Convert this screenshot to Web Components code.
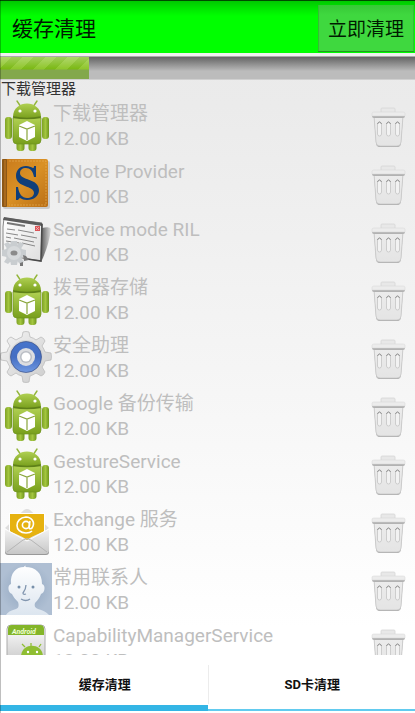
<!DOCTYPE html>
<html lang="zh-CN">
<head>
<meta charset="utf-8">
<meta name="viewport" content="width=device-width, initial-scale=1">
<title>缓存清理</title>
<style>
html, body { margin: 0; height: 100%; }
body { font-family: Roboto, "Noto Sans CJK SC", sans-serif; overflow: hidden; }
</style>
</head>
<body>
<cache-app></cache-app>
<script>
const define = (name, html, setup) => {
  const template = document.createElement('template');
  template.innerHTML = html;
  customElements.define(name, class extends HTMLElement {
    connectedCallback() {
      if (this.shadowRoot) return;
      this.attachShadow({ mode: 'open' }).append(template.content.cloneNode(true));
      if (setup) setup(this, this.shadowRoot);
    }
  });
};

const ICONS = {
  android: `
    <defs>
      <linearGradient id="g" x1="0" x2="0" y1="0" y2="1"><stop offset="0" stop-color="#b0d052"/><stop offset="1" stop-color="#789f1c"/></linearGradient>
      <linearGradient id="s" x1="0" x2="1" y1="0" y2="0"><stop offset="0" stop-color="#7fa225"/><stop offset=".5" stop-color="#a3c63f"/><stop offset="1" stop-color="#6f951c"/></linearGradient>
    </defs>
    <path d="M17 2l4 6M37 2l-4 6" stroke="#93b53a" stroke-width="1.4" stroke-linecap="round"/>
    <rect x="16.500" y="38" width="8" height="14" rx="3" fill="url(#s)"/><rect x="28.500" y="38" width="8" height="14" rx="3" fill="url(#s)"/>
    <rect x="5" y="18" width="7" height="22" rx="3" fill="url(#s)"/><rect x="42" y="18" width="7" height="22" rx="3" fill="url(#s)"/>
    <path d="M13 19h28v22q0 4-4 4H17q-4 0-4-4z" fill="url(#g)"/>
    <path d="M13 19h28v22q0 4-4 4H17q-4 0-4-4z" fill="none" stroke="#6f9420" stroke-width=".7"/>
    <path d="M13 18C13 0 41 0 41 18q-14 3-28 0z" fill="url(#g)"/>
    <path d="M13 18q14 3 28 0" fill="none" stroke="#5f8119" stroke-width="1.500"/>
    <circle cx="20" cy="12" r="1.600" fill="#fff"/><circle cx="35" cy="12" r="1.600" fill="#fff"/>
    <path d="M27 22l8 4v12l-8 4-8-4V26z" fill="#fff"/>
    <path d="M19 27l8 3 8-3M27 30v11" fill="none" stroke="#89a53b" stroke-width="1.200"/>`,
  book: `
    <defs><linearGradient id="b" x1="0" x2="1" y1="0" y2="1"><stop stop-color="#c8791b"/><stop offset=".5" stop-color="#da9125"/><stop offset="1" stop-color="#b96e15"/></linearGradient></defs>
    <rect x="3" y="4" width="47" height="48" rx="2" fill="#bbb" opacity=".7"/>
    <rect x="2" y="2" width="46" height="48" rx="2" fill="url(#b)"/>
    <rect x="2" y="2" width="5" height="48" rx="1" fill="#8d5816"/><path d="M5 3v46" stroke="#c47d27"/>
    <path d="M9 4h37v44H9" fill="none" stroke="#e9b45b" stroke-width=".6" stroke-dasharray="2 1"/>
    <path d="M36 9v11h-2c-1-6-4-9-8-9-4 0-6 2-6 5 0 8 19 5 19 17 0 6-5 10-12 10-3 0-5-1-7-2-1 0-1 1-2 2h-2V30h2c1 7 4 11 9 11 4 0 7-2 7-5 0-8-18-5-18-17 0-6 4-10 10-10 3 0 5 1 7 2 1 0 1-1 1-2z" fill="#103f7a"/>`,
  service: `
    <defs><linearGradient id="p" x1="0" x2="1" y1="0" y2="1"><stop stop-color="#fff"/><stop offset="1" stop-color="#dedede"/></linearGradient>
    <linearGradient id="h"><stop stop-color="#666"/><stop offset="1" stop-color="#ddd"/></linearGradient></defs>
    <path d="M42 13q8-2 9 1-2 16-9 31z" fill="url(#h)"/>
    <path d="M3 12L4 3l38 5-1 38-38-6z" fill="url(#p)" stroke="#888" stroke-width="1"/>
    <path d="M3 5l1-3 38 6v3z" fill="#5c5c5c"/>
    <path d="M7 8l18 3" stroke="#777" stroke-width="1.800"/>
    <rect x="35" y="11" width="5" height="5" fill="#db5357"/><path d="M36 12l3 3m0-3l-3 3" stroke="#f3b5b7" stroke-width=".8"/>
    <path d="M7 14l8 1m3 0l16 3M6 18l12 2m3 0l16 3M6 22l5 1m3 0l20 4M6 26l13 2m3 0l13 3" stroke="#888" stroke-width="1"/>
    <path d="M42 9l-1 37-14-2" fill="none" stroke="#4a4a4a" stroke-width="1.600"/>
    <g fill="#c9cdd0"><circle cx="14" cy="38" r="9"/>
    <path d="M11 26h6l1 5h-8zM11 50h6l1-5h-8zM2 35v6l5 1v-8zM26 35v6l-5 1v-8zM4 29l4-2 4 4-4 4zM24 29l-4-2-4 4 4 4zM4 47l4 2 4-4-4-4zM24 47l-4 2-4-4 4-4z"/></g>
    <circle cx="14" cy="38" r="7" fill="#d7dadc"/><ellipse cx="14" cy="38" rx="3.500" ry="2.500" fill="#8b8b8b"/><path d="M23 40l3 1 3 4-5 1zM20 48l3-1v4h-3z" fill="#777"/>`,
  gear: `
    <defs><linearGradient id="m" x1="0" x2="1" y1="0" y2="1"><stop stop-color="#f4f4f4"/><stop offset="1" stop-color="#cbcbcb"/></linearGradient>
    <linearGradient id="u" x1="0" x2="0" y1="0" y2="1"><stop stop-color="#4775cc"/><stop offset=".5" stop-color="#456ec2"/><stop offset="1" stop-color="#7099e2"/></linearGradient></defs>
    <path d="M22 6l1-5q3-1 6 0l1 5q4 1 6 3l5-3q3 1 4 4l-3 5q2 3 3 6l6 1q1 4 0 7l-6 1q-1 4-3 6l3 5q-1 3-4 4l-5-3q-3 2-6 3l-1 6q-3 1-6 0l-1-6q-4-1-6-3l-5 3q-3-1-4-4l3-5q-2-3-3-6l-6-1q-1-3 0-7l6-1q1-4 3-6l-3-5q1-3 4-4l5 3q3-2 6-3z" fill="url(#m)" stroke="#bdbdbd" stroke-width=".8"/>
    <circle cx="26" cy="26" r="17" fill="#d6d6d6"/><circle cx="26" cy="26" r="15.500" fill="url(#u)" stroke="#3c5187" stroke-width=".7"/>
    <circle cx="26" cy="26" r="9" fill="#dcdde0"/><circle cx="26" cy="26" r="6" fill="#b9bdc4"/><circle cx="26" cy="26" r="4.500" fill="#fff"/>`,
  mail: `
    <defs><linearGradient id="e" x1="0" x2="0" y1="0" y2="1"><stop stop-color="#f2f2f2"/><stop offset="1" stop-color="#c7c7c7"/></linearGradient></defs>
    <rect x="5" y="25" width="44" height="25" rx="3" fill="#999"/>
    <path d="M5 23L24 5q3-2 6 0l19 18-21 19z" fill="#dedede"/>
    <path d="M9 8h36v26H9z" fill="#fff"/><path d="M10 9h34v24H10z" fill="#e6b210"/>
    <path d="M5 24l22 10 22-10v21q0 4-4 4H9q-4 0-4-4z" fill="url(#e)"/>
    <path d="M10 22l17 13 17-13V10H10z" fill="#e6b210"/>
    <path d="M5 24l22 12 22-12" fill="none" stroke="#fff"/><path d="M7 47l16-12q4-3 8 0l16 12" fill="none" stroke="#b5b5b5"/>
    <circle cx="26" cy="20" r="3.600" fill="none" stroke="#fff" stroke-width="1.600"/>
    <path d="M30 16l-1 6q0 3 3 1c4-6-1-11-6-11-12 1-12 16 0 16 3 0 5-1 6-2" fill="none" stroke="#fff" stroke-width="1.600"/>`,
  person: `
    <defs><radialGradient id="bg"><stop stop-color="#8da3bd"/><stop offset="1" stop-color="#afbfd3"/></radialGradient>
    <linearGradient id="f" x1="0" x2="0" y1="0" y2="1"><stop stop-color="#fff"/><stop offset="1" stop-color="#dce5ef"/></linearGradient></defs>
    <path d="M0 0h52v52H0z" fill="url(#bg)"/>
    <path d="M6 52q2-4 10-6c3-1 3-4 2-7-4-4-5-6-6-8-4-1-5-9-1-10C10 10 16 4 24 4q1-2 2-1l-1 1c11 0 17 6 17 17 4 1 3 9-1 10-1 3-3 6-6 9-1 3 0 5 3 6 7 2 9 4 11 6z" fill="url(#f)"/>
    <circle cx="19" cy="24" r="1.500" fill="#7890aa"/><circle cx="33" cy="24" r="1.500" fill="#7890aa"/>
    <path d="M26 22q0 4-3 8 0 2 3 1M21 36q5 3 9 0" fill="none" stroke="#8296af" stroke-width="1.300"/>`,
  pack: `
    <defs><linearGradient id="k" x1="0" x2="0" y1="0" y2="1"><stop stop-color="#fff"/><stop offset="1" stop-color="#bbb"/></linearGradient></defs>
    <path d="M7 11V8q0-4 4-4h30q4 0 4 4v43H7z" fill="url(#k)" stroke="#aaa"/>
    <path d="M8 14V8q0-4 4-4h28q4 0 4 4v6z" fill="#83b529"/>
    <text x="12" y="13" font-family="Roboto" font-size="7" font-weight="700" font-style="italic" fill="#efffd5">Android</text>
    <path d="M21 36c0-15 22-15 22 0z" fill="#8fbe32"/><path d="M25 26l-3-3M39 26l2-3M31 25v-3" stroke="#8fbe32" stroke-width="1.300"/>
    <circle cx="28" cy="31" r="1.200" fill="#fff"/><circle cx="37" cy="31" r="1.200" fill="#fff"/>`,
  trash: `
    <defs><linearGradient id="t" x1="0" x2="0" y1="0" y2="1"><stop stop-color="#ececec"/><stop offset="1" stop-color="#e4e4e4"/></linearGradient></defs>
    <path d="M11 5V1q0-1 1-1h12q1 0 1 1v4z" fill="#e8e8e8" stroke="#d6d6d6" stroke-width=".8"/>
    <path d="M4 9h29l-2 26q0 4-4 4H10q-4 0-4-4z" fill="#aaa"/>
    <path d="M4 8h29l-2 26q0 4-4 4H10q-4 0-4-4z" fill="url(#t)" stroke="#c8c8c8" stroke-width=".8"/>
    <path d="M2 6h33v2q0 2-2 2H4q-2 0-2-2z" fill="#b2b2b2"/><path d="M2 5q0-1 2-1h29q2 0 2 1v3H2z" fill="#ececec" stroke="#d6d6d6" stroke-width=".5"/>
    <g fill="#f2f2f2" stroke="#c4c4c4" stroke-width=".8"><rect x="7.500" y="14" width="4" height="14" rx="2"/><rect x="16.500" y="14" width="4" height="14" rx="2"/><rect x="25.500" y="14" width="4" height="14" rx="2"/></g>
    <path d="M7.500 16q2-4 4 0M16.500 16q2-4 4 0M25.500 16q2-4 4 0" fill="none" stroke="#8c8c8c"/>`
};

define('app-icon', `
<style>:host { display: block; width: 52px; height: 52px; flex: none; } svg { display: block; width: 100%; height: 100%; }</style>
<svg aria-hidden="true" fill="none"></svg>`, (host, root) => {
  const svg = root.querySelector('svg');
  const name = host.getAttribute('name');
  svg.setAttribute('viewBox', name === 'trash' ? '0 -1 37 41' : '0 0 52 52');
  svg.innerHTML = ICONS[name];
});

define('title-bar', `
<style>
:host { display: flex; align-items: stretch; justify-content: space-between; height: 53px; box-sizing: border-box;
  padding: 5px 1px 1px 12px; background: linear-gradient(#004a00 0 1px, #00c800 1px, #00e400 8px, #0f0 16px); }
h1 { margin: 0; align-self: center; font-size: 21px; line-height: 44px; font-weight: 400; color: #001c00; }
button { font: 19px/44px Roboto, "Noto Sans CJK SC", sans-serif; color: #001c00; margin: 0; padding: 2px 10px 0; border: 0;
  background: linear-gradient(#37c837, #3fd83f 10px); box-shadow: inset 0 -1px #239823, inset 1px 0 #35bd35, inset -1px 0 #35bd35; }
</style>
<h1><slot></slot></h1><button type="button"><slot name="action"></slot></button>`);

define('scan-progress', `
<style>
:host { display: block; border-top: 3px solid #f0f0f0; }
.track { height: 24px; border-top: 1px solid #aaa; border-bottom: 1px solid #d0d0d0; box-sizing: border-box;
  background: linear-gradient(#646464, #b4b4b4 13px, #bcbcbc 14px); }
.bar { height: 100%; background:
  linear-gradient(transparent 12px, #83a84c 13px),
  linear-gradient(rgba(255,255,255,.3), transparent 12px),
  repeating-linear-gradient(135deg, #8fc62c 0 8px, #7bb914 8px 16px); }
p { margin: 0; padding-left: 1px; font-size: 15px; line-height: 18px; color: #333; }
</style>
<div class="track" role="progressbar" aria-label="扫描进度" aria-valuemin="0" aria-valuemax="100"><div class="bar"></div></div>
<p><slot></slot></p>`, (host, root) => {
  const value = host.getAttribute('value');
  root.querySelector('.bar').style.width = value + '%';
  root.querySelector('.track').setAttribute('aria-valuenow', value);
});

define('cache-row', `
<style>
:host { display: flex; box-sizing: border-box; height: 58px; padding: 1px 8px 0 0; }
.text { flex: 1; min-width: 0; padding: 2px 0 0 1px; font-size: 19px; line-height: 26px; color: #bebebe; white-space: nowrap; }
.size { line-height: 24px; }
button { flex: none; align-self: flex-start; margin: 0; padding: 8px 0 0; border: 0; background: none; }
button app-icon { width: 37px; height: 41px; }
</style>
<app-icon></app-icon>
<div class="text"><div><slot></slot></div><div class="size"><slot name="size"></slot></div></div>
<button type="button"><app-icon name="trash"></app-icon></button>`, (host, root) => {
  const old = root.querySelector('app-icon');
  const icon = document.createElement('app-icon');
  icon.setAttribute('name', host.getAttribute('icon'));
  old.replaceWith(icon);
  root.querySelector('button').setAttribute('aria-label', '清理');
});

define('tab-item', `
<style>
:host { display: flex; flex: 1; }
button { flex: 1; margin: 0; padding: 3px 0 0 2px; border: 0; border-bottom: 2px solid #fff; background: #fff;
  box-shadow: inset 0 -2px #62cbef; font: 700 13px/20px Roboto, "Noto Sans CJK SC", sans-serif; color: #111; }
:host([selected]) button { box-shadow: inset 0 -6px #33b5e5; }
</style>
<button type="button" role="tab"><slot></slot></button>`, (host, root) =>
  root.querySelector('button').setAttribute('aria-selected', host.hasAttribute('selected')));

define('tab-strip', `
<style>
:host { display: flex; position: relative; height: 58px; flex: none; background: #fff; }
:host::after { content: ""; position: absolute; left: 50%; top: 10px; bottom: 9px; width: 1px; background: #ececec; }
</style>
<slot></slot>`);

define('cache-app', `
<style>
:host { display: flex; flex-direction: column; height: 100vh; position: relative;
  background: linear-gradient(#e9e9e9, #ebebeb 15%, #fff 88%); }
:host::after { content: ""; position: absolute; left: 0; top: 0; bottom: 0; width: 1px; background: rgba(0,0,0,.25); pointer-events: none; }
main { flex: 1; min-height: 0; overflow: hidden; }
title-bar, scan-progress { flex: none; }
</style>
<title-bar>缓存清理<span slot="action">立即清理</span></title-bar>
<scan-progress value="21.5">下载管理器</scan-progress>
<main></main>
<tab-strip role="tablist"><tab-item selected>缓存清理</tab-item><tab-item>SD卡清理</tab-item></tab-strip>`, (host, root) => {
  const rows = [
    ['android', '下载管理器'], ['book', 'S Note Provider'], ['service', 'Service mode RIL'],
    ['android', '拨号器存储'], ['gear', '安全助理'], ['android', 'Google 备份传输'],
    ['android', 'GestureService'], ['mail', 'Exchange 服务'], ['person', '常用联系人'],
    ['pack', 'CapabilityManagerService']
  ];
  root.querySelector('main').innerHTML = rows.map(([icon, name]) =>
    `<cache-row icon="${icon}">${name}<span slot="size">12.00 KB</span></cache-row>`).join('');
});
</script>
</body>
</html>
